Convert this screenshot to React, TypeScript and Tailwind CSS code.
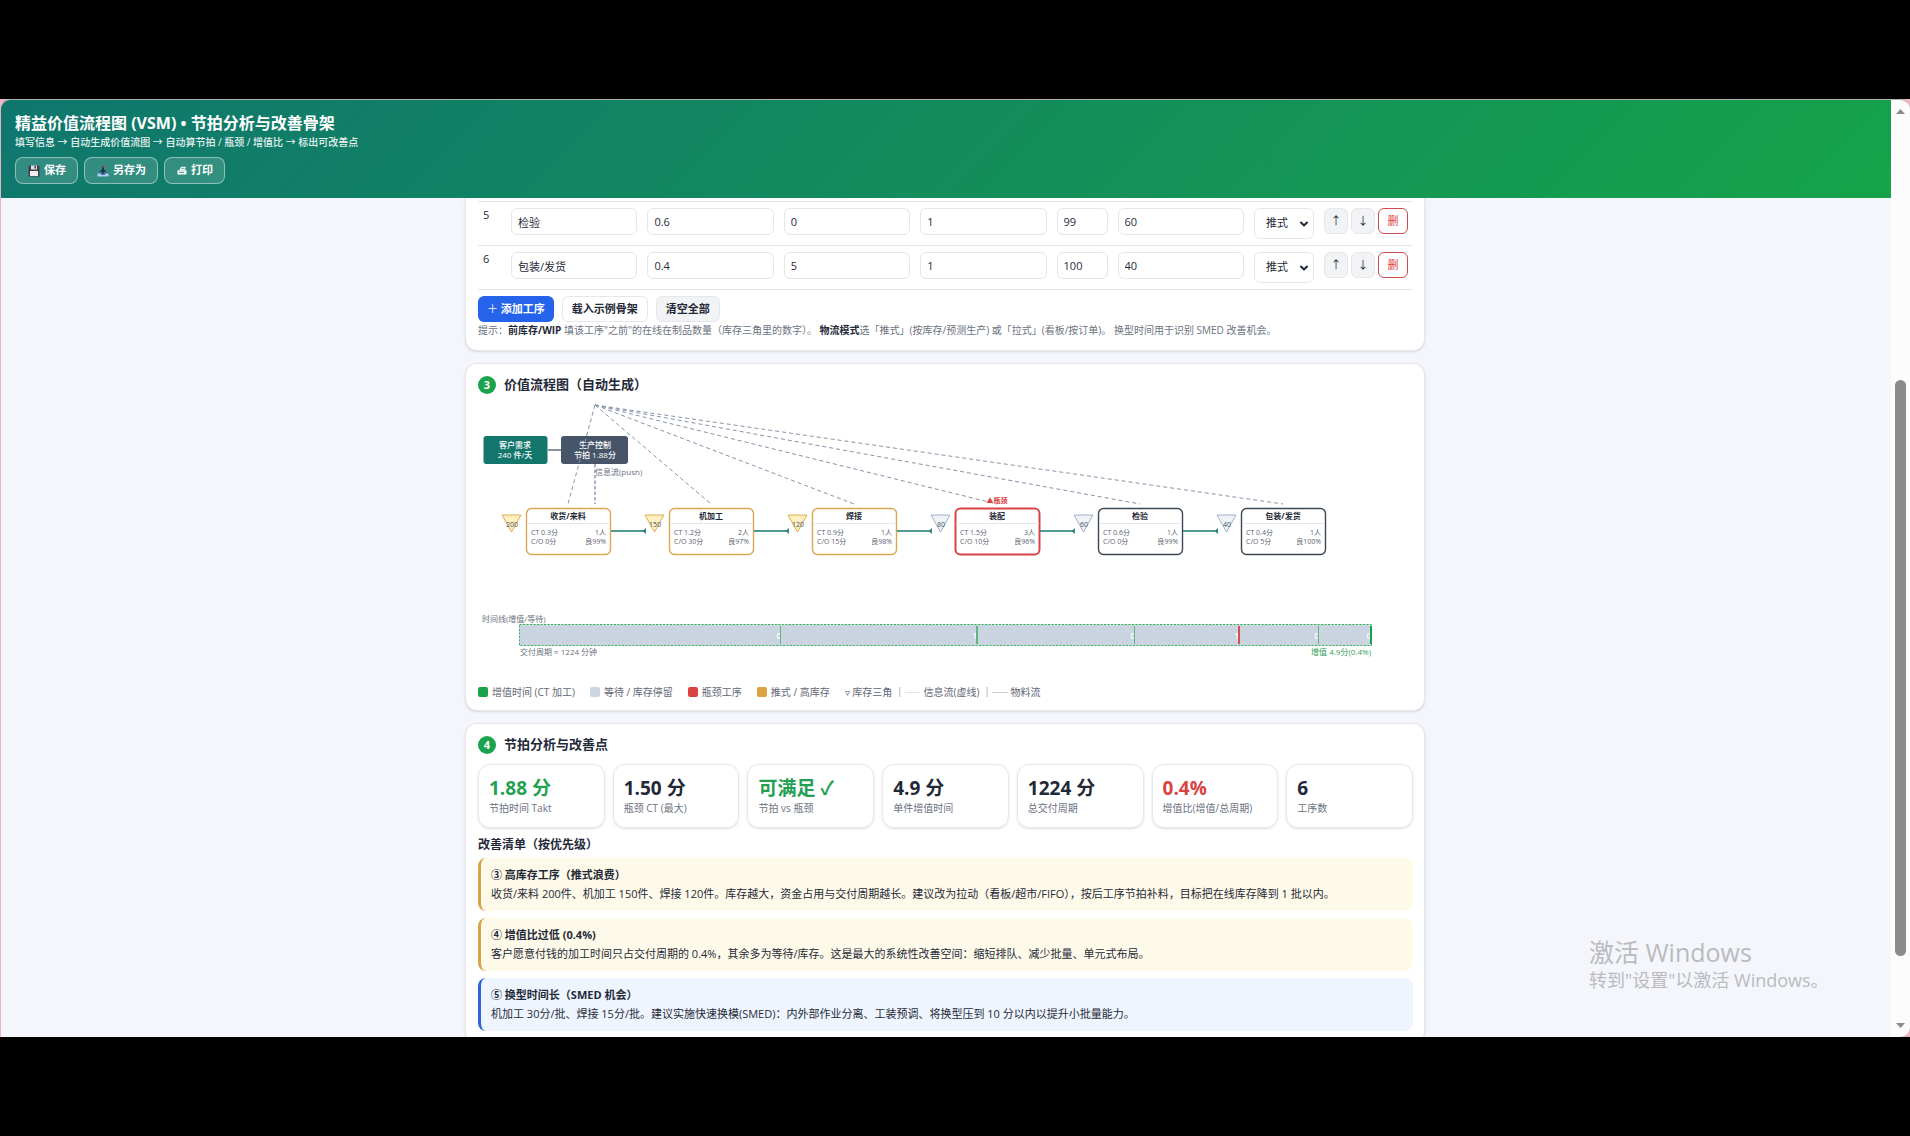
import React from 'react';
import { ChevronDown } from 'lucide-react';

type Step = {
  name: string;
  ct: string;
  co: string;
  people: string;
  yieldRate: string;
  wip: string;
};

const steps: Step[] = [
  { name: '收货/来料', ct: '0.3', co: '0', people: '1', yieldRate: '99', wip: '200' },
  { name: '机加工', ct: '1.2', co: '30', people: '2', yieldRate: '97', wip: '150' },
  { name: '焊接', ct: '0.9', co: '15', people: '1', yieldRate: '98', wip: '120' },
  { name: '装配', ct: '1.5', co: '10', people: '3', yieldRate: '96', wip: '80' },
  { name: '检验', ct: '0.6', co: '0', people: '1', yieldRate: '99', wip: '60' },
  { name: '包装/发货', ct: '0.4', co: '5', people: '1', yieldRate: '100', wip: '40' },
];

const BOTTLENECK = 3;
const HIGH_WIP = 100;

// Timeline: x of each value-added slice, its drawn width and rounded minutes
const slices = [
  { x: 302, w: 1, label: '0' },
  { x: 498, w: 2, label: '1' },
  { x: 656, w: 1, label: '0' },
  { x: 760, w: 2, label: '1' },
  { x: 840, w: 1, label: '0' },
  { x: 892, w: 2, label: '0' },
];

const stats = [
  { value: '1.88 分', label: '节拍时间 Takt', tone: 'text-[#23a052]' },
  { value: '1.50 分', label: '瓶颈 CT (最大)', tone: 'text-[#1f2937]' },
  { value: '可满足 ✓', label: '节拍 vs 瓶颈', tone: 'text-[#23a052]' },
  { value: '4.9 分', label: '单件增值时间', tone: 'text-[#1f2937]' },
  { value: '1224 分', label: '总交付周期', tone: 'text-[#1f2937]' },
  { value: '0.4%', label: '增值比(增值/总周期)', tone: 'text-[#d94343]' },
  { value: '6', label: '工序数', tone: 'text-[#1f2937]' },
];

const issues = [
  {
    title: '③ 高库存工序（推式浪费）',
    text: '收货/来料 200件、机加工 150件、焊接 120件。库存越大，资金占用与交付周期越长。建议改为拉动（看板/超市/FIFO），按后工序节拍补料，目标把在线库存降到 1 批以内。',
    box: 'bg-[#fefaea] border-[#d6a54a]',
  },
  {
    title: '④ 增值比过低 (0.4%)',
    text: '客户愿意付钱的加工时间只占交付周期的 0.4%，其余多为等待/库存。这是最大的系统性改善空间：缩短排队、减少批量、单元式布局。',
    box: 'bg-[#fefaea] border-[#d6a54a]',
  },
  {
    title: '⑤ 换型时间长（SMED 机会）',
    text: '机加工 30分/批、焊接 15分/批。建议实施快速换模(SMED)：内外部作业分离、工装预调、将换型压到 10 分以内以提升小批量能力。',
    box: 'bg-[#eef5ff] border-[#2f63d8]',
  },
];

const card = 'bg-white border border-[#e5e7ec] shadow-sm pl-3 pr-[11px]';
const field = 'w-full h-[27px] px-1.5 bg-white border border-[#e3e6ea] rounded-md text-[#1f2937]';

const SaveIcon = () => (
  <svg viewBox="0 0 12 12" className="w-3 h-3" aria-hidden="true">
    <path d="M0.5 0.5h10l1 1v10h-11z" fill="#3b4148" />
    <rect x="3" y="0.5" width="6" height="4" fill="#dfe3e6" />
    <rect x="6.5" y="1" width="1.5" height="2.5" fill="#3b4148" />
    <rect x="2" y="6" width="8" height="5" fill="#f4ecf0" />
  </svg>
);

const SaveAsIcon = () => (
  <svg viewBox="0 0 12 12" className="w-3 h-3" aria-hidden="true">
    <path d="M2.5 6L0.5 8.5v3h11v-3L9.500 6z" fill="#3c6f9c" />
    <path d="M0.5 8.500h3l1 1.500h3l1-1.500h3v3h-11z" fill="#a9d5f3" />
    <path d="M5 1h2v4h2L6 8.500 3 5h2z" fill="#23303d" />
    <rect x="5.500" y="0.500" width="1.500" height="2" fill="#c8414b" />
  </svg>
);

const PrintIcon = () => (
  <svg viewBox="0 0 10 10" className="w-[10px] h-[10px]" aria-hidden="true">
    <path d="M2.500 4L4 0.800h5L8 4z" fill="#e8f5f0" />
    <path d="M0.500 4.200h9v4.300h-9z" fill="#fff" />
    <path d="M2 6.300h5" stroke="#3b9481" strokeWidth="1" />
    <path d="M4.500 2.500h3" stroke="#3b9481" strokeWidth="0.700" />
  </svg>
);

const HeaderButton = ({ icon, children }: { icon: React.ReactNode; children: React.ReactNode }) => (
  <button className="flex items-center gap-1 h-[27px] pl-3 pr-[11px] rounded-lg border border-white/45 bg-white/15 text-[11px] font-bold text-white">
    {icon}
    {children}
  </button>
);

const SectionTitle = ({ num, children }: { num: number; children: React.ReactNode }) => (
  <h2 className="flex items-center gap-2 h-[18px] text-[13px] font-semibold text-[#1f2937]">
    <span className="w-[18px] h-[18px] rounded-full bg-[#1ba24c] text-white text-[11px] leading-[18px] text-center font-bold">
      {num}
    </span>
    {children}
  </h2>
);

const StepRow = ({ step, index }: { step: Step; index: number }) => (
  <tr className="border-b border-[#e3e5e9] align-top">
    <td className="px-[5px] py-1.5 leading-[14px]">{index}</td>
    {[
      ['工序名称', step.name],
      ['CT', step.ct],
      ['C/O', step.co],
      ['人数', step.people],
      ['良率', step.yieldRate],
      ['前库存', step.wip],
    ].map(([label, value]) => (
      <td key={label} className="px-[5px] py-1.5">
        <input aria-label={label} defaultValue={value} className={field} />
      </td>
    ))}
    <td className="px-[5px] py-1.5">
      <div className="relative">
        <select
          aria-label="物流模式"
          className="block w-full h-[31px] pl-[11px] appearance-none bg-white border border-[#e3e6ea] rounded-md"
        >
          <option>推式</option>
          <option>拉式</option>
        </select>
        <ChevronDown className="absolute right-1 top-2.5 w-3 h-3 pointer-events-none" strokeWidth={4} />
      </div>
    </td>
    <td className="px-[5px] py-1.5">
      <div className="flex gap-[3px]">
        <button className="w-6 h-[26px] rounded-md border border-[#e5e7eb] bg-[#f1f3f5]">↑</button>
        <button className="w-6 h-[26px] rounded-md border border-[#e5e7eb] bg-[#f1f3f5]">↓</button>
        <button className="w-[30px] h-[26px] rounded-md border border-[#cf4a4a] bg-white text-[#d94343]">删</button>
      </div>
    </td>
  </tr>
);

const StreamMap = () => (
  <svg viewBox="0 0 935 280" className="block w-full mt-1.5" role="img" aria-label="价值流程图">
    {/* Customer and production control */}
    <rect x="5.500" y="36" width="64" height="28" rx="3" fill="#12766c" />
    <path d="M70 50h13" stroke="#475569" strokeWidth="1.300" />
    <rect x="83" y="36" width="67" height="28" rx="3" fill="#475569" />
    <g fill="#fff" fontSize="8" fontWeight="500" textAnchor="middle">
      <text x="37" y="48">客户需求</text>
      <text x="37" y="58">240 件/天</text>
      <text x="117" y="48">生产控制</text>
      <text x="117" y="58">节拍 1.88分</text>
    </g>
    <path d="M117 64v40" stroke="#7480a0" strokeWidth="1.200" strokeDasharray="3.500 2" />
    <text x="117" y="75" fontSize="8" fill="#6b7280">信息流(push)</text>

    {steps.map((s, i) => {
      const x = 48 + i * 143;
      const high = Number(s.wip) >= HIGH_WIP;
      const hot = i === BOTTLENECK;
      return (
        <g key={s.name}>
          <path
            d={`M117 5L${x + 42} 104`}
            stroke="#8793a8"
            strokeWidth="1"
            strokeDasharray="4 3"
          />
          <path
            d={`M${x - 24} 115h19l-9.500 17z`}
            fill={high ? '#fef0c0' : '#eef3f9'}
            stroke={high ? '#dcae50' : '#a3b1c4'}
          />
          <text x={x - 14} y="127" fontSize="7" fill="#475569" textAnchor="middle">{s.wip}</text>
          <rect
            x={x + 0.5}
            y="108.500"
            width="84"
            height="46"
            rx="5"
            fill="#fff"
            stroke={hot ? '#d64545' : high ? '#d9a850' : '#3d4756'}
            strokeWidth={hot ? 2 : 1.4}
          />
          <path d={`M${x + 1} 123.500h83`} stroke="#e5e7eb" />
          <text x={x + 42} y="119" fontSize="8" fontWeight="700" fill="#1f2937" textAnchor="middle">{s.name}</text>
          <g fontSize="7" fill="#5b6472">
            <text x={x + 5} y="135">CT {s.ct}分</text>
            <text x={x + 80} y="135" textAnchor="end">{s.people}人</text>
            <text x={x + 5} y="144">C/O {s.co}分</text>
            <text x={x + 80} y="144" textAnchor="end">良{s.yieldRate}%</text>
          </g>
          {hot && (
            <text x={x + 42} y="103" fontSize="7" fontWeight="700" fill="#d94343" textAnchor="middle">▲瓶颈</text>
          )}
          {i < steps.length - 1 && (
            <g>
              <path d={`M${x + 85} 131h34`} stroke="#17786c" strokeWidth="1.600" />
              <path d={`M${x + 119.5} 128.500v5l-2-2.500z`} fill="#17786c" stroke="#17786c" strokeWidth="0.600" />
            </g>
          )}
        </g>
      );
    })}

    {/* Timeline */}
    <text x="4" y="222" fontSize="8" fill="#6b7280">时间线(增值/等待)</text>
    <rect x="41.500" y="224.500" width="852" height="21" fill="#cbd5e1" stroke="#bfe5cb" />
    <rect x="41.500" y="224.500" width="852" height="21" fill="none" stroke="#3fae68" strokeDasharray="2 1.500" />
    {slices.map((s, i) => (
      <g key={s.x}>
        <text x={s.x + 1} y="239" fontSize="8" fontWeight="600" fill="#fff" textAnchor="end">{s.label}</text>
        <rect
          x={s.x}
          y="226"
          width={s.w}
          height="18"
          fill={i === BOTTLENECK ? '#d94f4f' : i === 5 ? '#16a34a' : '#5fb680'}
        />
      </g>
    ))}
    <text x="42" y="255" fontSize="8" fill="#6b7280">交付周期 ≈ 1224 分钟</text>
    <text x="893" y="255" fontSize="8" fill="#35a05c" textAnchor="end">增值 4.9分(0.4%)</text>
  </svg>
);

const Legend = ({ color, children }: { color: string; children: React.ReactNode }) => (
  <span className="flex items-center gap-1">
    <i className={`w-2.5 h-2.5 rounded-xs ${color}`} />
    {children}
  </span>
);

const Scrollbar = () => (
  <div className="w-[19px] shrink-0 flex flex-col items-center bg-[#fcfcfc] pt-[9px] pb-[9px]">
    <svg viewBox="0 0 9 5" className="w-[9px] h-[5px]" aria-hidden="true"><path d="M0 5L4.500 0 9 5z" fill="#8b8b8b" /></svg>
    <div className="flex-[266]" />
    <div className="flex-[575] w-[11px] rounded-full bg-[#8b8b8b]" />
    <div className="flex-[67]" />
    <svg viewBox="0 0 9 5" className="w-[9px] h-[5px]" aria-hidden="true"><path d="M0 0L4.500 5 9 0z" fill="#8b8b8b" /></svg>
  </div>
);

const App: React.FC = () => {
  return (
    <div className="h-screen bg-black py-[99px] font-['Open_Sans','Noto_Sans_CJK_SC',sans-serif] text-[11px] text-[#1f2937]">
      <div className="relative h-full bg-[#f0b4c4]">
        <div className="flex h-full rounded-t-[10px] rounded-br-[10px] overflow-hidden border-t border-t-[#a9b0ac] border-l border-l-[#e9b3c3]">
          <div className="flex-1 min-w-0 flex flex-col bg-[#f4f6fb]">
            {/* Header */}
            <header className="shrink-0 h-[98px] px-[14px] pt-[13px] bg-[linear-gradient(135deg,#0f766e,#16a34a)] text-white">
              <h1 className="text-[16px] leading-5 font-bold">精益价值流程图 (VSM) • 节拍分析与改善骨架</h1>
              <p className="mt-0.5 text-[10px] leading-[14px] font-medium text-white/90">
                填写信息 → 自动生成价值流图 → 自动算节拍 / 瓶颈 / 增值比 → 标出可改善点
              </p>
              <div className="flex gap-1.5 mt-2">
                <HeaderButton icon={<SaveIcon />}>保存</HeaderButton>
                <HeaderButton icon={<SaveAsIcon />}>另存为</HeaderButton>
                <HeaderButton icon={<PrintIcon />}>打印</HeaderButton>
              </div>
            </header>

            <main className="flex-1 min-h-0 overflow-hidden pr-0.5">
              <div className="max-w-[960px] mx-auto flex flex-col gap-3">
                {/* Step table */}
                <section className={`${card} rounded-b-xl border-t-0 pt-[3px] pb-3`}>
                  <table className="w-full table-fixed border-collapse border-t border-[#e3e5e9]">
                    <colgroup>
                      <col className="w-[28px]" />
                      <col />
                      <col />
                      <col />
                      <col />
                      <col className="w-[61px]" />
                      <col />
                      <col className="w-[70px]" />
                      <col className="w-[94px]" />
                    </colgroup>
                    <tbody>
                      {steps.slice(4).map((s, i) => (
                        <StepRow key={s.name} step={s} index={i + 5} />
                      ))}
                    </tbody>
                  </table>
                  <div className="flex gap-2 mt-1.5 font-bold">
                    <button className="h-[26px] px-[9px] rounded-md bg-[#2563eb] text-white">
                      <span className="font-normal">＋</span> 添加工序
                    </button>
                    <button className="h-[26px] px-[9px] rounded-md border border-[#e5e7eb] bg-white">载入示例骨架</button>
                    <button className="h-[26px] px-[9px] rounded-md border border-[#e5e7eb] bg-[#f1f3f5]">清空全部</button>
                  </div>
                  <p className="text-[10px] leading-4 text-[#6b7280] whitespace-nowrap">
                    提示：<b className="text-[#1f2937]">前库存/WIP</b> 填该工序"之前"的在线在制品数量（库存三角里的数字）。{' '}
                    <b className="text-[#1f2937]">物流模式</b>选「推式」(按库存/预测生产) 或「拉式」(看板/按订单)。 换型时间用于识别 SMED 改善机会。
                  </p>
                </section>

                {/* Value stream map */}
                <section className={`${card} rounded-xl pt-3 pb-2.5`}>
                  <SectionTitle num={3}>价值流程图（自动生成）</SectionTitle>
                  <StreamMap />
                  <div className="flex items-center gap-[15px] mt-1 h-4 text-[10px] text-[#5f6774] whitespace-nowrap">
                    <Legend color="bg-[#1ba24c]">增值时间 (CT 加工)</Legend>
                    <Legend color="bg-[#cbd5e1]">等待 / 库存停留</Legend>
                    <Legend color="bg-[#dc4141]">瓶颈工序</Legend>
                    <Legend color="bg-[#d9a441]">推式 / 高库存</Legend>
                    <span>
                      ▿ 库存三角 ｜<span className="text-[8px] font-bold">┄┄</span> 信息流(虚线) ｜
                      <span className="text-[8px] font-bold">──</span> 物料流
                    </span>
                  </div>
                </section>

                {/* Analysis */}
                <section className={`${card} rounded-xl pt-3 pb-3`}>
                  <SectionTitle num={4}>节拍分析与改善点</SectionTitle>
                  <div className="grid grid-cols-7 gap-2 mt-2.5">
                    {stats.map((s) => (
                      <div key={s.label} className="h-16 px-2.5 pt-[11px] rounded-xl border border-[#e5e7eb] shadow-sm">
                        <div className={`text-[19px] leading-6 font-bold ${s.tone}`}>{s.value}</div>
                        <div className="text-[10px] leading-4 text-[#6b7280] whitespace-nowrap">{s.label}</div>
                      </div>
                    ))}
                  </div>
                  <h3 className="mt-2 mb-1 text-[12px] leading-[18px] font-semibold">改善清单（按优先级）</h3>
                  <div className="flex flex-col gap-[7px]">
                    {issues.map((it) => (
                      <div key={it.title} className={`h-[53px] pl-2.5 pt-2 border-l-[3px] rounded-lg ${it.box}`}>
                        <h4 className="leading-[18px] font-bold">{it.title}</h4>
                        <p className="leading-[19px] whitespace-nowrap">{it.text}</p>
                      </div>
                    ))}
                  </div>
                </section>
              </div>
            </main>
          </div>
          <Scrollbar />
        </div>

        {/* Activation watermark */}
        <div className="absolute right-[85px] bottom-[45px] w-[236px] text-[#b9bbbf] whitespace-nowrap pointer-events-none">
          <p className="text-[25px] leading-8">激活 Windows</p>
          <p className="text-[18px] leading-6">转到"设置"以激活 Windows。</p>
        </div>
      </div>
    </div>
  );
};

export default App;
